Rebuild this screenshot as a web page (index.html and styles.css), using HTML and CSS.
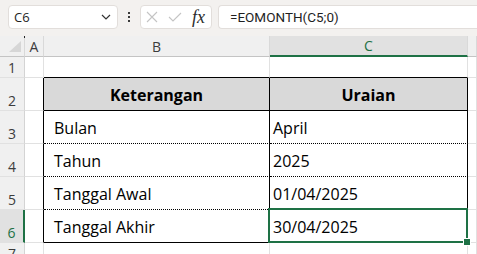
FILE: index.html
```html
<!DOCTYPE html>
<html>
<head>
<meta charset="utf-8">
<link rel="stylesheet" href="styles.css">
</head>
<body>
<div class="toolbar">
  <div class="namebox">
    <span>C6</span>
    <svg class="chev" width="10" height="6" viewBox="0 0 10 6"><path d="M1 1 L5 5 L9 1" fill="none" stroke="#333" stroke-width="1.2"/></svg>
  </div>
  <div class="more"><i></i><i></i><i></i></div>
  <div class="fbtns">
    <svg class="ico-x" width="12" height="12" viewBox="0 0 12 12"><path d="M1 1 L11 11 M11 1 L1 11" stroke="#c4c4c4" stroke-width="1.1" fill="none"/></svg>
    <svg class="ico-ok" width="14" height="10" viewBox="0 0 14 10"><path d="M1 5 L5 9 L13 1" stroke="#c4c4c4" stroke-width="1.1" fill="none"/></svg>
    <span class="fx">fx</span>
  </div>
  <div class="formula">=EOMONTH(C5;0)</div>
</div>
<div class="sheet">
  <div class="corner"><svg width="12" height="11" viewBox="0 0 12 11"><path d="M12 0 L12 11 L0 11 Z" fill="#d6d6d6"/></svg></div>
  <div class="ch">A</div>
  <div class="ch">B</div>
  <div class="ch ch-sel">C</div>
  <div class="ch ch-rest"></div>

  <div class="rh">1</div>
  <div class="c"></div>
  <div class="c t-top"></div>
  <div class="c t-top"></div>
  <div class="c"></div>

  <div class="rh">2</div>
  <div class="c t-left"></div>
  <div class="c th">Keterangan</div>
  <div class="c th">Uraian</div>
  <div class="c"></div>

  <div class="rh">3</div>
  <div class="c t-left"></div>
  <div class="c td indent">Bulan</div>
  <div class="c td">April</div>
  <div class="c"></div>

  <div class="rh">4</div>
  <div class="c t-left"></div>
  <div class="c td indent">Tahun</div>
  <div class="c td">2025</div>
  <div class="c"></div>

  <div class="rh">5</div>
  <div class="c t-left"></div>
  <div class="c td indent">Tanggal Awal</div>
  <div class="c td">01/04/2025</div>
  <div class="c"></div>

  <div class="rh rh-sel">6</div>
  <div class="c t-left"></div>
  <div class="c td last indent">Tanggal Akhir</div>
  <div class="c td last active">30/04/2025<span class="sel"><span class="handle"></span></span></div>
  <div class="c"></div>

  <div class="rh">7</div>
  <div class="c"></div>
  <div class="c"></div>
  <div class="c"></div>
  <div class="c"></div>
</div>
</body>
</html>
```
FILE: styles.css
```css
* {
  box-sizing: border-box;
}

body {
  margin: 0;
  width: 477px;
  height: 254px;
  overflow: hidden;
  background: #ffffff;
  font-family: "Open Sans", "Noto Sans", sans-serif;
  color: #000;
}

.toolbar {
  height: 36px;
  background: #f3f1ef;
  display: flex;
  align-items: flex-start;
  padding: 5px 0 0 8px;
}

.namebox {
  width: 110px;
  height: 24px;
  background: #fff;
  border: 1px solid #e2dedb;
  border-radius: 4px;
  display: flex;
  align-items: center;
  justify-content: space-between;
  padding: 0 6px 0 5px;
  font-size: 13px;
  color: #1f1f1f;
}

.chev {
  display: block;
}

.more {
  width: 22px;
  height: 24px;
  display: flex;
  flex-direction: column;
  align-items: center;
  justify-content: center;
  gap: 2px;
}

.more i {
  display: block;
  width: 2px;
  height: 2px;
  background: #3a3a3a;
}

.fbtns {
  width: 72px;
  height: 24px;
  background: #fff;
  border: 1px solid #e2dedb;
  border-radius: 4px;
  display: flex;
  align-items: center;
  padding-left: 5px;
}

.ico-x {
  display: block;
}

.ico-ok {
  display: block;
  margin-left: 10px;
}

.fx {
  margin-left: 10px;
  font-family: "Liberation Serif", "DejaVu Serif", serif;
  font-style: italic;
  font-size: 18px;
  line-height: 22px;
  color: #2b2b2b;
}

.formula {
  margin-left: 6px;
  flex: 1;
  height: 24px;
  background: #fff;
  border: 1px solid #e2dedb;
  border-right: none;
  border-radius: 4px 0 0 4px;
  padding-left: 11px;
  font-family: Roboto, "Open Sans", sans-serif;
  font-size: 13.5px;
  line-height: 22px;
  color: #1f1f1f;
}

.sheet {
  display: grid;
  grid-template-columns: 25px 19px 226px 198px 1fr;
  grid-template-rows: 21px 21px repeat(5, 33px) 21px;
}

.sheet > div {
  border-right: 1px solid #e1e1e1;
  border-bottom: 1px solid #e1e1e1;
}

.corner {
  background: #f0f0f0;
  display: flex;
  align-items: flex-end;
  justify-content: flex-end;
  padding: 0 3px 4px 0;
  position: relative;
}

.corner svg {
  display: block;
}

.corner::before {
  content: "";
  position: absolute;
  right: -1px;
  top: 0;
  width: 1px;
  height: 2px;
  background: #222;
}

.sheet > .corner,
.sheet > .ch {
  border-bottom-color: #c4c4c4;
  border-right-color: #d9d9d9;
}

.ch {
  background: #f0f0f0;
  display: flex;
  align-items: center;
  justify-content: center;
  font-size: 14px;
  color: #3c3c3c;
}

.sheet > .ch-sel {
  background: #e1e1e1;
  color: #1e7145;
  border-bottom: 2px solid #1e7145;
}

.rh {
  background: #f0f0f0;
  display: flex;
  align-items: flex-end;
  justify-content: center;
  font-size: 14px;
  color: #3c3c3c;
  line-height: 19px;
}

.sheet > .rh {
  border-right-color: #d4d4d4;
}

.sheet > .rh-sel {
  background: #e1e1e1;
  color: #1e7145;
  border-right: 2px solid #1e7145;
}

.sheet > .t-top {
  border-bottom-color: #000;
}

.sheet > .t-left {
  border-right-color: #000;
}

.c {
  display: flex;
  align-items: flex-end;
  font-size: 16px;
  padding-bottom: 4px;
  line-height: 22px;
}

.sheet > .th {
  background: #d9d9d9;
  border-right-color: #000;
  border-bottom-color: #000;
  font-weight: 700;
  justify-content: center;
}

.sheet > .td {
  border-right-color: #000;
  border-bottom: 1px dotted #000;
  padding-left: 3px;
}

.sheet > .indent {
  padding-left: 10px;
}

.sheet > .last {
  border-bottom: 1px solid #000;
}

.active {
  position: relative;
}

.sel {
  position: absolute;
  left: -2px;
  top: -2px;
  right: -1px;
  bottom: -1px;
  border: 2px solid #1e7145;
}

.handle {
  position: absolute;
  right: -4px;
  bottom: -4px;
  width: 6px;
  height: 6px;
  background: #1e7145;
  box-shadow: 0 0 0 1px #fff;
}
```
